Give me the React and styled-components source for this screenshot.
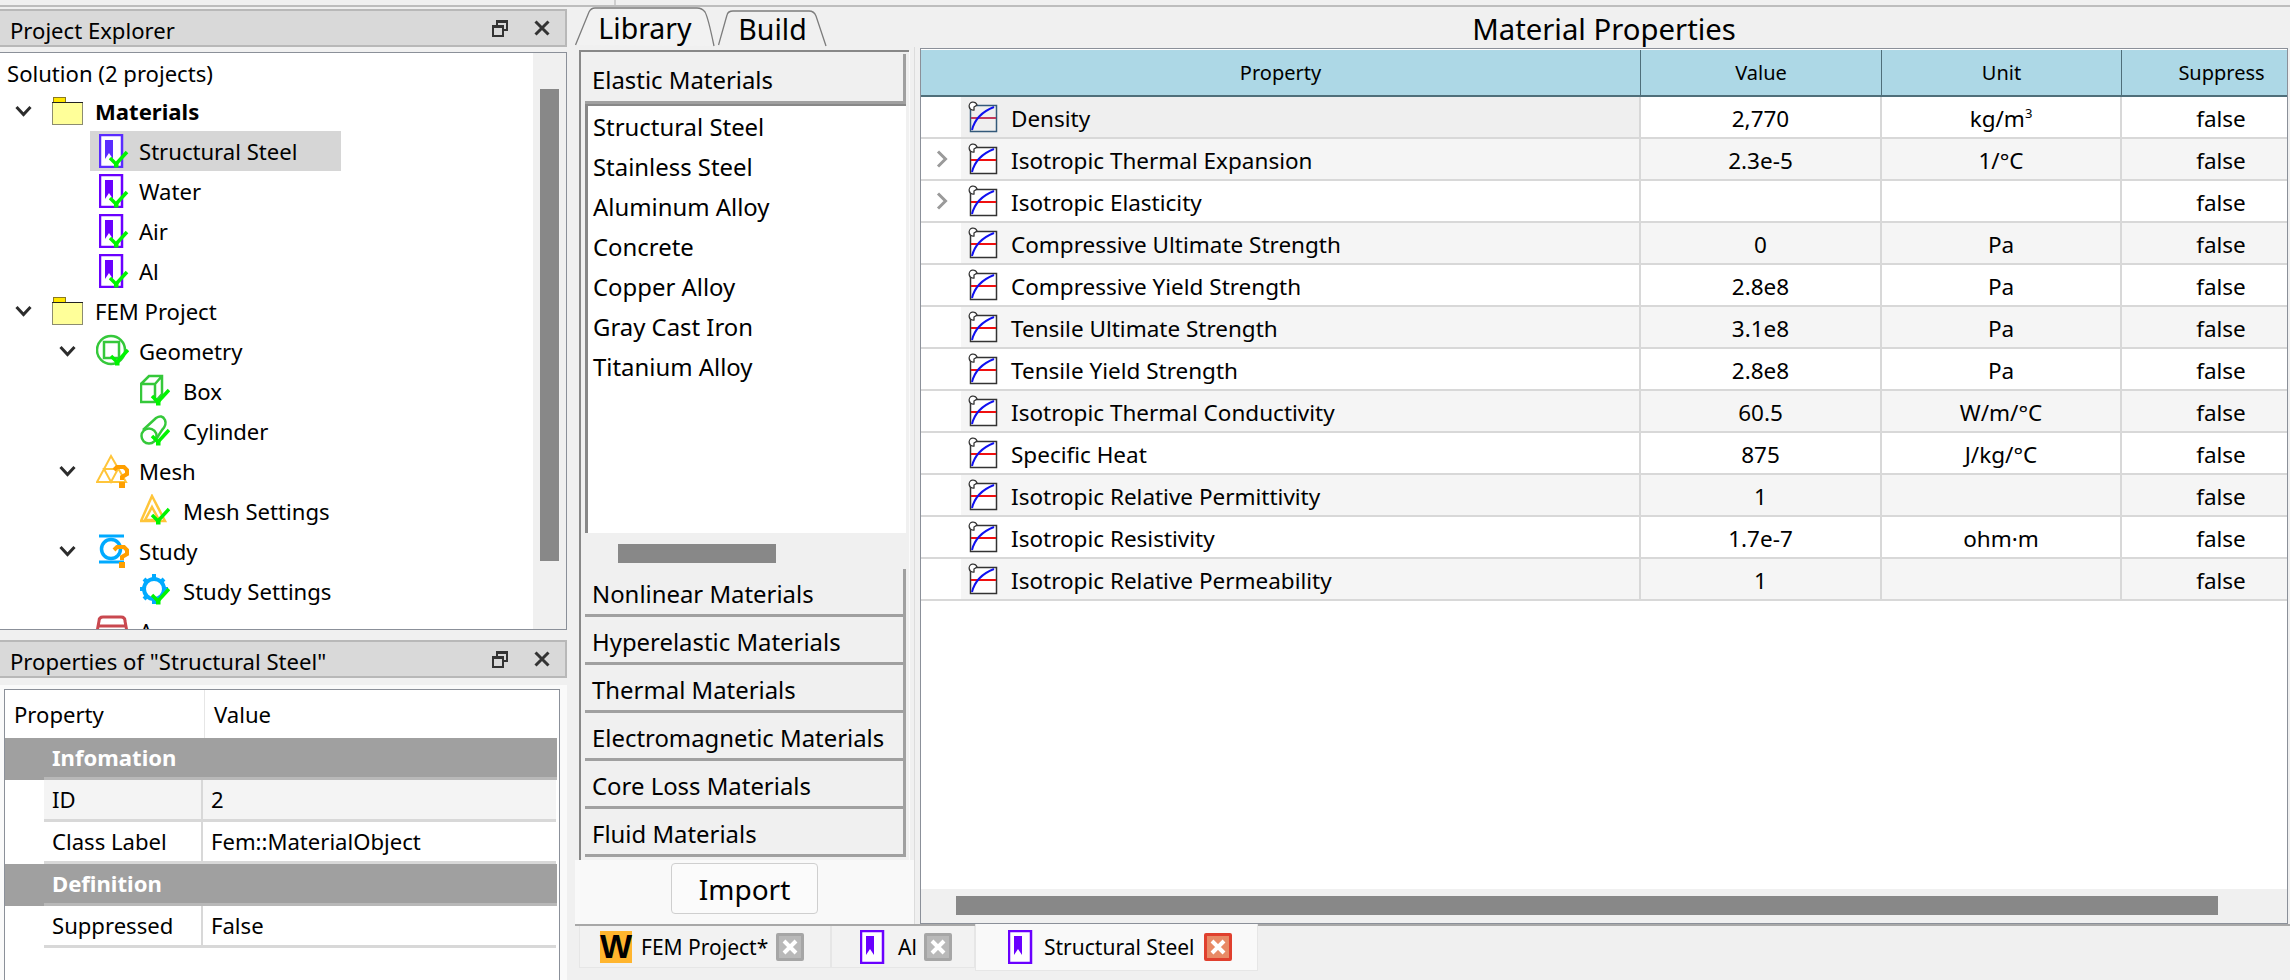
import React from "react";
import styled, { createGlobalStyle } from "styled-components";

const GlobalStyle = createGlobalStyle`
  html, body {
    margin: 0;
    padding: 0;
    background: #f0f0f0;
  }
  * {
    box-sizing: border-box;
  }
`;

const PURPLE = "#6a00ff";
const CHECK = "#00f400";
const GREEN = "#35c83a";
const AMBER = "#ffc53a";
const ORANGE = "#ff9f00";
const SKY = "#00aaff";

// ---- icons ----

const Check = ({ x = 0, y = 0 }) => (
  <g transform={`translate(${x} ${y})`}>
    <path d="M1 6 L7 12 L18 0" fill="none" stroke={CHECK} strokeWidth="3.5" />
    <rect x="5" y="10" width="4.5" height="5.5" fill={CHECK} />
  </g>
);

const Question = ({ x = 0, y = 0 }) => (
  <g transform={`translate(${x} ${y})`}>
    <path d="M1 4 L4 1 H11 L14 4 V8 L9 11 V14" fill="none" stroke={ORANGE} strokeWidth="4" />
    <rect x="6" y="16" width="6" height="6" fill={ORANGE} />
  </g>
);

const MaterialIcon = ({ checked = true, tone = PURPLE }) => (
  <svg width="30" height="34" viewBox="0 0 30 34">
    <rect x="1" y="1" width="22" height="32" fill="#fff" stroke={tone} strokeWidth="2.5" />
    <path d="M6 6 H14 V25 L10 19 L6 25 Z" fill={tone} />
    {checked && <Check x="10" y="18" />}
  </svg>
);

const FolderIcon = () => (
  <svg width="31" height="28" viewBox="0 0 31 28">
    <rect x="1.5" y="0.5" width="12" height="5" fill="#ffe600" stroke="#8a7a20" />
    <rect x="0.5" y="5.5" width="30" height="22" fill="#ffff99" stroke="#8c8c70" />
    <path d="M0 5.5 H31" stroke="#222" strokeWidth="1" />
  </svg>
);

const GeometryIcon = () => (
  <svg width="33" height="34" viewBox="0 0 33 34">
    <circle cx="15" cy="16" r="14" fill="none" stroke={GREEN} strokeWidth="2.5" />
    <rect x="8" y="8" width="15" height="16" fill="none" stroke={GREEN} strokeWidth="2.5" />
    <Check x="14" y="16" />
  </svg>
);

const BoxIcon = () => (
  <svg width="30" height="34" viewBox="0 0 30 34">
    <path d="M1 10 H15 V28 H1 Z M1 10 L9 2 H22 V20 L15 28 M15 10 L22 2" fill="none" stroke={GREEN} strokeWidth="2.5" />
    <Check x="11" y="16" />
  </svg>
);

const CylinderIcon = () => (
  <svg width="30" height="34" viewBox="0 0 30 34">
    <circle cx="9" cy="22" r="7.5" fill="none" stroke={GREEN} strokeWidth="2.5" />
    <path d="M3 16 L16 4 Q22 0 25 6 Q27 11 22 16 L15 27" fill="none" stroke={GREEN} strokeWidth="2.5" />
    <Check x="11" y="16" />
  </svg>
);

const MeshIcon = () => (
  <svg width="33" height="34" viewBox="0 0 33 34">
    <path d="M15 2 L30 28 H1 Z M8 15 H22 L15 28 Z" fill="none" stroke={AMBER} strokeWidth="2" />
    <Question x="17" y="12" />
  </svg>
);

const MeshSettingsIcon = () => (
  <svg width="30" height="34" viewBox="0 0 30 34">
    <path d="M12 2 L25 27 H1 Z" fill="none" stroke={AMBER} strokeWidth="2.5" />
    <path d="M12 13 L19 26 H5 Z" fill="none" stroke={AMBER} strokeWidth="2.5" />
    <Check x="11" y="15" />
  </svg>
);

const StudyIcon = () => (
  <svg width="33" height="34" viewBox="0 0 33 34">
    <path d="M3 2 H28 M3 28 H28" stroke={SKY} strokeWidth="3" />
    <circle cx="15" cy="15" r="9.5" fill="none" stroke={SKY} strokeWidth="3.5" />
    <Question x="17" y="12" />
  </svg>
);

const GearIcon = () => (
  <svg width="30" height="34" viewBox="0 0 30 34">
    <circle cx="14" cy="15" r="10" fill="none" stroke={SKY} strokeWidth="4" />
    <path d="M14 0 V4 M14 26 V30 M0 15 H3 M25 15 H28 M4 5 L6 7 M24 5 L22 7 M4 25 L6 23" stroke={SKY} strokeWidth="4" />
    <Check x="11" y="15" />
  </svg>
);

const AnalysisIcon = () => (
  <svg width="33" height="34" viewBox="0 0 33 34">
    <path d="M1 18 L3 7 Q3 3 7 3 H25 Q29 3 29 7 L31 18 M1 12 H31" fill="none" stroke="#c9484f" strokeWidth="3" />
  </svg>
);

const CurveIcon = ({ dim }) => (
  <svg width="31" height="32" viewBox="0 0 31 32">
    <rect x="3.5" y="4.5" width="26" height="26" fill={dim ? "#efefef" : "#fff"} stroke={dim ? "#33597a" : "#333"} strokeWidth="1.5" />
    <path d="M4 17 H29" stroke={dim ? "#c23a5c" : "#f01010"} strokeWidth="2" />
    <path d="M5 29 Q9 13 27 6" fill="none" stroke="#1010f0" strokeWidth="2" />
    <path d="M7 9 A4 4 0 1 1 10 4 L7 6 Z" fill="#fff" stroke="#333" strokeWidth="1.3" />
  </svg>
);

const ChevronDown = () => (
  <svg width="17" height="12" viewBox="0 0 17 12">
    <path d="M1.5 2 L8.5 9.5 L15.5 2" fill="none" stroke="#2c2c2c" strokeWidth="3" />
  </svg>
);

const ChevronRight = () => (
  <svg width="12" height="18" viewBox="0 0 12 18">
    <path d="M2 1.5 L9.5 9 L2 16.5" fill="none" stroke="#9a9a9a" strokeWidth="3" />
  </svg>
);

const RestoreIcon = () => (
  <svg width="16" height="17" viewBox="0 0 16 17">
    <path d="M5 5 V1 H15 V10 H11" fill="none" stroke="#333" strokeWidth="2" />
    <rect x="1" y="6" width="10" height="10" fill="none" stroke="#333" strokeWidth="2" />
    <path d="M5 2 H15 M1 7 H11" stroke="#333" strokeWidth="2" />
  </svg>
);

const CloseIcon = () => (
  <svg width="16" height="16" viewBox="0 0 16 16">
    <path d="M1.5 1.5 L14.5 14.5 M14.5 1.5 L1.5 14.5" stroke="#333" strokeWidth="3" />
  </svg>
);

const LibraryShape = () => (
  <svg width="140" height="40" viewBox="0 0 140 40">
    <path d="M0.5 38 L14 5 Q16 1 20 1 H122 Q127 1 130 5 Q133 10 139 39" fill="#f2f2f2" stroke="#7c7c7c" strokeWidth="1.3" />
  </svg>
);

const BuildShape = () => (
  <svg width="109" height="38" viewBox="0 0 109 38">
    <path d="M0.5 36 L9 6 Q10 2 15 2 H91 Q96 2 98 7 L108 37" fill="#f0f0f0" stroke="#7c7c7c" strokeWidth="1.3" />
  </svg>
);

// ---- data ----

const treeRows = [
  { level: 0, icon: <FolderIcon />, label: "Materials", bold: true },
  { level: 1, icon: <MaterialIcon tone="#5a2cff" />, label: "Structural Steel", selected: true, narrow: true },
  { level: 1, icon: <MaterialIcon />, label: "Water", narrow: true },
  { level: 1, icon: <MaterialIcon />, label: "Air", narrow: true },
  { level: 1, icon: <MaterialIcon />, label: "Al", narrow: true },
  { level: 0, icon: <FolderIcon />, label: "FEM Project" },
  { level: 1, icon: <GeometryIcon />, label: "Geometry", chevron: true },
  { level: 2, icon: <BoxIcon />, label: "Box" },
  { level: 2, icon: <CylinderIcon />, label: "Cylinder" },
  { level: 1, icon: <MeshIcon />, label: "Mesh", chevron: true },
  { level: 2, icon: <MeshSettingsIcon />, label: "Mesh Settings" },
  { level: 1, icon: <StudyIcon />, label: "Study", chevron: true },
  { level: 2, icon: <GearIcon />, label: "Study Settings" },
  { level: 1, icon: <AnalysisIcon />, label: "A" },
];

const materials = [
  "Structural Steel",
  "Stainless Steel",
  "Aluminum Alloy",
  "Concrete",
  "Copper Alloy",
  "Gray Cast Iron",
  "Titanium Alloy",
];

const categories = [
  "Nonlinear Materials",
  "Hyperelastic Materials",
  "Thermal Materials",
  "Electromagnetic Materials",
  "Core Loss Materials",
  "Fluid Materials",
];

const properties = [
  ["Density", "2,770", "kg/m", false, "3"],
  ["Isotropic Thermal Expansion", "2.3e-5", "1/°C", true],
  ["Isotropic Elasticity", "", "", true],
  ["Compressive Ultimate Strength", "0", "Pa"],
  ["Compressive Yield Strength", "2.8e8", "Pa"],
  ["Tensile Ultimate Strength", "3.1e8", "Pa"],
  ["Tensile Yield Strength", "2.8e8", "Pa"],
  ["Isotropic Thermal Conductivity", "60.5", "W/m/°C"],
  ["Specific Heat", "875", "J/kg/°C"],
  ["Isotropic Relative Permittivity", "1", ""],
  ["Isotropic Resistivity", "1.7e-7", "ohm·m"],
  ["Isotropic Relative Permeability", "1", ""],
];

// ---- page ----

export default function App() {
  return (
    <Page>
      <GlobalStyle />
      <TopStrip>
        <TopCell />
      </TopStrip>
      <Body>
        <LeftColumn>
          <DockTitle>
            <DockText>Project Explorer</DockText>
            <DockButtons>
              <RestoreIcon />
              <CloseIcon />
            </DockButtons>
          </DockTitle>
          <TreeBox>
            <TreeList>
              <SolutionRow>Solution (2 projects)</SolutionRow>
              {treeRows.map((row) => (
                <TreeRow key={row.label} $level={row.level}>
                  <TreeChevron>{(row.level === 0 || row.chevron) && <ChevronDown />}</TreeChevron>
                  <TreeLabelWrap $selected={row.selected}>
                    <TreeIcon $narrow={row.narrow}>{row.icon}</TreeIcon>
                    <TreeLabel $bold={row.bold}>{row.label}</TreeLabel>
                  </TreeLabelWrap>
                </TreeRow>
              ))}
            </TreeList>
            <VScroll>
              <VThumb />
            </VScroll>
          </TreeBox>

          <DockTitle $second>
            <DockText>Properties of "Structural Steel"</DockText>
            <DockButtons>
              <RestoreIcon />
              <CloseIcon />
            </DockButtons>
          </DockTitle>
          <PropsPane>
            <PropsBox>
              <PropsHead>
                <PropsHeadCell>Property</PropsHeadCell>
                <PropsHeadCell $value>Value</PropsHeadCell>
              </PropsHead>
              <PropsGroup><PropsGroupLabel>Infomation</PropsGroupLabel></PropsGroup>
              <PropsRow $alt>
                <PropsCell>ID</PropsCell>
                <PropsCell $value>2</PropsCell>
              </PropsRow>
              <PropsRow>
                <PropsCell>Class Label</PropsCell>
                <PropsCell $value>Fem::MaterialObject</PropsCell>
              </PropsRow>
              <PropsGroup><PropsGroupLabel>Definition</PropsGroupLabel></PropsGroup>
              <PropsRow>
                <PropsCell>Suppressed</PropsCell>
                <PropsCell $value>False</PropsCell>
              </PropsRow>
            </PropsBox>
          </PropsPane>
        </LeftColumn>

        <RightColumn>
          <Workspace>
            <LibraryColumn>
              <TabBar>
                <TabItem $width={140} $height={40}>
                  <TabShape><LibraryShape /></TabShape>
                  <TabText>Library</TabText>
                </TabItem>
                <TabItem $width={109} $height={38}>
                  <TabShape><BuildShape /></TabShape>
                  <TabText>Build</TabText>
                </TabItem>
              </TabBar>
              <LibraryPane>
                <Toolbox>
                  <ToolHeader $first>Elastic Materials</ToolHeader>
                  <MaterialList>
                    {materials.map((m) => (
                      <MaterialItem key={m}>{m}</MaterialItem>
                    ))}
                  </MaterialList>
                  <HScroll>
                    <HThumb />
                  </HScroll>
                  {categories.map((c) => (
                    <ToolHeader key={c}>{c}</ToolHeader>
                  ))}
                </Toolbox>
                <ImportRow>
                  <ImportButton>Import</ImportButton>
                </ImportRow>
              </LibraryPane>
            </LibraryColumn>

            <TableColumn>
              <TableTitle>Material Properties</TableTitle>
              <TablePanel>
                <TableClip>
                  <HeaderRow>
                    <HeaderCell>Property</HeaderCell>
                    <HeaderCell>Value</HeaderCell>
                    <HeaderCell>Unit</HeaderCell>
                    <HeaderCell>Suppress</HeaderCell>
                  </HeaderRow>
                  {properties.map(([name, value, unit, expandable, power], i) => (
                    <DataRow key={name} $alt={i % 2 === 1}>
                      <NameCell>
                        <Gutter>{expandable && <ChevronRight />}</Gutter>
                        <NameInner $alt={i % 2 === 1} $current={i === 0}>
                          <CurveIcon dim={i === 0} />
                          <NameText>{name}</NameText>
                        </NameInner>
                      </NameCell>
                      <ValueCell>{value}</ValueCell>
                      <ValueCell>
                        <span>
                          {unit}
                          {power && <Sup>{power}</Sup>}
                        </span>
                      </ValueCell>
                      <ValueCell>false</ValueCell>
                    </DataRow>
                  ))}
                </TableClip>
                <TableScroll>
                  <TableThumb />
                </TableScroll>
              </TablePanel>
            </TableColumn>
          </Workspace>

          <DocTabs>
            <DocTab $width={252}>
              <LogoW>W</LogoW>
              <DocLabel $after={8}>FEM Project*</DocLabel>
              <DocClose />
            </DocTab>
            <DocTab $width={144} $pad={28}>
              <MaterialIcon checked={false} />
              <DocLabel $gap={-1} $after={7}>Al</DocLabel>
              <DocClose />
            </DocTab>
            <DocTab $width={283} $pad={32} $active>
              <MaterialIcon checked={false} />
              <DocLabel $gap={-3} $after={9}>Structural Steel</DocLabel>
              <DocClose $active />
            </DocTab>
          </DocTabs>
        </RightColumn>
      </Body>
    </Page>
  );
}

function DocClose({ $active }) {
  return (
    <DocCloseBox $active={$active}>
      <svg width="16" height="16" viewBox="0 0 16 16">
        <path d="M2 2 L14 14 M14 2 L2 14" stroke="#fff" strokeWidth="4" />
      </svg>
    </DocCloseBox>
  );
}

// ---- styled components ----

const Sup = styled.span`
  font-size: 13px;
  line-height: 0;
  vertical-align: 9px;
`;

const Page = styled.div`
  width: 2290px;
  height: 980px;
  overflow: hidden;
  display: flex;
  flex-direction: column;
  background: #f0f0f0;
  font-family: "Noto Sans", sans-serif;
  font-size: 22.5px;
  color: #000;
`;

const TopStrip = styled.div`
  height: 7px;
  border-bottom: 2px solid #bdbdbd;
`;

const TopCell = styled.div`
  width: 616px;
  height: 5px;
  border-right: 2px solid #cfcfcf;
`;

const Body = styled.div`
  flex: 1;
  min-height: 0;
  display: flex;
`;

const LeftColumn = styled.div`
  width: 567px;
  display: flex;
  flex-direction: column;
  font-size: 22.1px;
`;

const DockTitle = styled.div`
  height: 38px;
  margin-top: ${(p) => (p.$second ? "10px" : "2px")};
  display: flex;
  align-items: center;
  justify-content: space-between;
  padding: 0 15px 0 10px;
  background: #d9d9d9;
  border: 2px solid #b8b8b8;
  border-left: none;
`;

const DockText = styled.span`
  padding-top: 3px;
`;

const DockButtons = styled.div`
  display: flex;
  align-items: center;
  gap: 26px;
`;

const TreeBox = styled.div`
  height: 578px;
  margin-top: 5px;
  display: flex;
  background: #fff;
  border: 1px solid #8b9099;
  border-left: none;
  overflow: hidden;
`;

const TreeList = styled.div`
  flex: 1;
  min-width: 0;
  padding-top: 2px;
`;

const SolutionRow = styled.div`
  height: 36px;
  line-height: 36px;
  padding-left: 7px;
`;

const TreeRow = styled.div`
  height: 40px;
  display: flex;
  align-items: center;
  padding-left: ${(p) => 15 + p.$level * 44}px;
`;

const TreeChevron = styled.div`
  width: 37px;
  flex: none;
  display: flex;
  align-items: center;
`;

const TreeLabelWrap = styled.div`
  height: 40px;
  display: flex;
  align-items: center;
  margin-left: ${(p) => (p.$selected ? "-6px" : "0")};
  padding: ${(p) => (p.$selected ? "0 44px 0 6px" : "0")};
  background: ${(p) => (p.$selected ? "#d6d6d6" : "transparent")};
`;

const TreeIcon = styled.div`
  width: 43px;
  flex: none;
  display: flex;
  align-items: center;
  padding-left: ${(p) => (p.$narrow ? "3px" : "0")};
`;

const TreeLabel = styled.span`
  font-weight: ${(p) => (p.$bold ? 700 : 400)};
`;

const VScroll = styled.div`
  width: 33px;
  flex: none;
  padding: 36px 7px 0;
  background: #f0f0f0;
`;

const VThumb = styled.div`
  height: 472px;
  background: #888;
`;

const PropsPane = styled.div`
  flex: 1;
  margin-top: 7px;
  padding: 4px 7px 0 4px;
  background: #fafafa;
`;

const PropsBox = styled.div`
  height: 100%;
  background: #fff;
  border: 1px solid #8b9099;
  border-bottom: none;
`;

const PropsHead = styled.div`
  height: 48px;
  display: flex;
  align-items: center;
`;

const PropsHeadCell = styled.div`
  height: 100%;
  display: flex;
  align-items: center;
  width: ${(p) => (p.$value ? "auto" : "199px")};
  padding-left: 9px;
  border-left: ${(p) => (p.$value ? "1px solid #e6e6e6" : "none")};
`;

const PropsGroup = styled.div`
  height: 42px;
  margin-right: 2px;
  background: #a0a0a0;
`;

const PropsGroupLabel = styled.div`
  height: 42px;
  margin-left: 39px;
  padding-left: 8px;
  line-height: 39px;
  color: #fff;
  font-weight: 700;
  border-bottom: 3px solid #b8b8b8;
`;

const PropsRow = styled.div`
  height: 42px;
  margin: 0 3px 0 39px;
  display: flex;
  background: ${(p) => (p.$alt ? "#f4f4f4" : "#fff")};
  border-bottom: 3px solid #d8d8d8;
`;

const PropsCell = styled.div`
  display: flex;
  align-items: center;
  padding: 0 0 1px 8px;
  width: ${(p) => (p.$value ? "auto" : "159px")};
  flex: ${(p) => (p.$value ? "1" : "none")};
  border-right: ${(p) => (p.$value ? "none" : "2px solid #d8d8d8")};
`;

const RightColumn = styled.div`
  flex: 1;
  min-width: 0;
  display: flex;
  flex-direction: column;
  padding-left: 8px;
`;

const Workspace = styled.div`
  height: 917px;
  display: flex;
`;

const LibraryColumn = styled.div`
  width: 340px;
  flex: none;
  display: flex;
  flex-direction: column;
`;

const TabBar = styled.div`
  height: 40px;
  display: flex;
  align-items: flex-end;
  gap: 3px;
  padding-top: 1px;
`;

const TabItem = styled.div`
  position: relative;
  width: ${(p) => p.$width}px;
  height: ${(p) => p.$height}px;
  display: flex;
  align-items: center;
  justify-content: center;
`;

const TabShape = styled.div`
  position: absolute;
  inset: 0;
  line-height: 0;
`;

const TabText = styled.span`
  position: relative;
  padding-top: 3px;
  font-size: 28.5px;
  line-height: 1;
`;

const LibraryPane = styled.div`
  flex: 1;
  min-height: 0;
  display: flex;
  flex-direction: column;
  padding: 3px 0 0 4px;
  border-right: 1px solid #dcdcdc;
  background: #f0f0f0;
`;

const Toolbox = styled.div`
  width: 330px;
  height: 810px;
  padding: 2px 3px 0 4px;
  border-top: 2px solid #888;
  border-left: 2px solid #888;
  box-shadow: 1px 1px 0 #fafafa;
  display: flex;
  flex-direction: column;
  font-size: 23.9px;
`;

const ToolHeader = styled.div`
  flex: none;
  height: ${(p) => (p.$first ? "50px" : "48px")};
  padding: 3px 0 0 7px;
  display: flex;
  align-items: center;
  background: #f0f0f0;
  border-right: 3px solid #a0a0a0;
  border-bottom: 3px solid #a0a0a0;
`;

const MaterialList = styled.div`
  height: 429px;
  padding: 1px 0 0 5px;
  background: #fff;
  border-left: 3px solid #888;
  border-top: 2px solid #888;
`;

const MaterialItem = styled.div`
  height: 40px;
  line-height: 40px;
`;

const HScroll = styled.div`
  height: 36px;
  padding: 11px 0 0 33px;
  background: #f0f0f0;
`;

const HThumb = styled.div`
  width: 158px;
  height: 19px;
  background: #888;
`;

const ImportRow = styled.div`
  flex: 1;
  display: flex;
  justify-content: center;
  align-items: flex-start;
  padding: 3px 0 0 0;
  margin-left: -4px;
  background: #f9f9f9;
`;

const ImportButton = styled.div`
  width: 147px;
  height: 51px;
  display: flex;
  align-items: center;
  justify-content: center;
  font-size: 28px;
  background: #fbfbfb;
  border: 1px solid #cfcfcf;
  border-radius: 4px;
`;

const TableColumn = styled.div`
  width: 1368px;
  margin-left: 5px;
  flex: none;
  display: flex;
  flex-direction: column;
`;

const TableTitle = styled.div`
  height: 41px;
  padding-top: 2px;
  display: flex;
  align-items: center;
  justify-content: center;
  font-size: 29.3px;
`;

const TablePanel = styled.div`
  flex: 1;
  min-height: 0;
  display: flex;
  flex-direction: column;
  background: #fff;
  border: 1px solid #8b9099;
`;

const TableClip = styled.div`
  flex: 1;
  min-height: 0;
  overflow: hidden;
`;

const COLUMNS = "720px 241px 240px 200px";

const HeaderRow = styled.div`
  width: 1401px;
  height: 48px;
  display: grid;
  grid-template-columns: ${COLUMNS};
  background: #add8e6;
  border-top: 1px solid #fff;
  border-bottom: 2px solid #4f6f7a;
`;

const HeaderCell = styled.div`
  display: flex;
  align-items: center;
  justify-content: center;
  font-size: 20px;
  border-right: 1px solid #4f6f7a;
`;

const DataRow = styled.div`
  width: 1401px;
  height: 42px;
  display: grid;
  grid-template-columns: ${COLUMNS};
  background: ${(p) => (p.$alt ? "#f5f5f5" : "#fff")};
  border-bottom: 2px solid #d8d8d8;
`;

const NameCell = styled.div`
  display: flex;
  background: #fff;
  border-right: 2px solid #d8d8d8;
`;

const Gutter = styled.div`
  width: 40px;
  flex: none;
  display: flex;
  align-items: center;
  padding-left: 15px;
`;

const NameInner = styled.div`
  flex: 1;
  display: flex;
  align-items: center;
  gap: 13px;
  padding-left: 6px;
  background: ${(p) => (p.$current ? "#efefef" : p.$alt ? "#f5f5f5" : "#fff")};
`;

const NameText = styled.span`
  padding-top: 3px;
`;

const ValueCell = styled.div`
  display: flex;
  align-items: center;
  justify-content: center;
  padding-top: 3px;
  border-right: 2px solid #d8d8d8;
`;

const TableScroll = styled.div`
  flex: none;
  height: 34px;
  padding: 7px 0 0 35px;
  background: #f0f0f0;
`;

const TableThumb = styled.div`
  width: 1262px;
  height: 19px;
  background: #888;
`;

const DocTabs = styled.div`
  flex: 1;
  display: flex;
  align-items: flex-start;
  padding-left: 4px;
  border-top: 2px solid #a8a8a8;
`;

const DocTab = styled.div`
  width: ${(p) => p.$width}px;
  height: ${(p) => (p.$active ? "47px" : "42px")};
  margin-top: ${(p) => (p.$active ? "-2px" : "0")};
  display: flex;
  align-items: center;
  padding-left: ${(p) => p.$pad ?? 20}px;
  background: ${(p) => (p.$active ? "#f9f9f9" : "#f2f2f2")};
  border: 1px solid #e6e6e6;
  border-top: none;
`;

const LogoW = styled.div`
  width: 32px;
  height: 32px;
  flex: none;
  display: flex;
  align-items: center;
  justify-content: center;
  background: #ffb52e;
  color: #000;
  font-family: "Liberation Sans", sans-serif;
  font-size: 34px;
  font-weight: 700;
`;

const DocLabel = styled.span`
  margin: 0 ${(p) => p.$after ?? 9}px 0 ${(p) => 9 + (p.$gap ?? 0)}px;
  font-size: 21px;
  white-space: nowrap;
`;

const DocCloseBox = styled.div`
  width: 28px;
  height: 28px;
  flex: none;
  display: flex;
  align-items: center;
  justify-content: center;
  background: ${(p) => (p.$active ? "#e88a66" : "#b9b9b9")};
  border: 3px solid ${(p) => (p.$active ? "#e0402e" : "#a6a6a6")};
  border-radius: 2px;
`;
